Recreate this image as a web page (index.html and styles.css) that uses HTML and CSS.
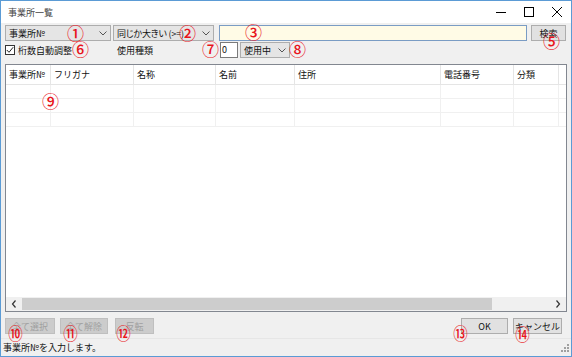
FILE: index.html
```html
<!DOCTYPE html>
<html lang="ja">
<head>
<meta charset="utf-8">
<link rel="stylesheet" href="styles.css">
</head>
<body>
<div class="window">
  <div class="titlebar">
    <span class="title">事業所一覧</span>
    <div class="winctl">
      <span class="ctl"><svg width="10" height="10" viewBox="0 0 10 10"><path d="M0 5.5h10" stroke="#000" stroke-width="1"/></svg></span>
      <span class="ctl"><svg width="10" height="10" viewBox="0 0 10 10"><rect x="0.5" y="0.5" width="9" height="9" fill="none" stroke="#000"/></svg></span>
      <span class="ctl"><svg width="10" height="10" viewBox="0 0 10 10"><path d="M0 0L10 10M10 0L0 10" stroke="#000" stroke-width="1"/></svg></span>
    </div>
  </div>
  <div class="body">
    <div class="row1">
      <div class="combo c1"><span>事業所№</span><svg class="chev" width="8" height="5" viewBox="0 0 8 5"><path d="M0.5 0.5L4 4L7.5 0.5" fill="none" stroke="#555"/></svg></div>
      <div class="combo c2"><span>同じか大きい (&gt;=)</span><svg class="chev" width="8" height="5" viewBox="0 0 8 5"><path d="M0.5 0.5L4 4L7.5 0.5" fill="none" stroke="#555"/></svg></div>
      <div class="textin"></div>
      <div class="btn search">検索</div>
    </div>
    <div class="row2">
      <div class="check"><span class="box"><svg width="8" height="8" viewBox="0 0 8 8"><path d="M0.8 4L3 6.3L7.2 1.2" fill="none" stroke="#222" stroke-width="1"/></svg></span><span>桁数自動調整</span></div>
      <span class="lbl">使用種類</span>
      <div class="numin">0</div>
      <div class="combo c3"><span>使用中</span><svg class="chev" width="8" height="5" viewBox="0 0 8 5"><path d="M0.5 0.5L4 4L7.5 0.5" fill="none" stroke="#555"/></svg></div>
    </div>
    <div class="grid">
      <div class="gridinner">
        <div class="hdr">
          <span class="col w1">事業所№</span>
          <span class="col w2">フリガナ</span>
          <span class="col w3">名称</span>
          <span class="col w4">名前</span>
          <span class="col w5">住所</span>
          <span class="col w6">電話番号</span>
          <span class="col w7">分類</span>
        </div>
        <div class="rows">
          <div class="grow"><span class="col w1"></span><span class="col w2"></span><span class="col w3"></span><span class="col w4"></span><span class="col w5"></span><span class="col w6"></span><span class="col w7"></span></div>
          <div class="grow"><span class="col w1"></span><span class="col w2"></span><span class="col w3"></span><span class="col w4"></span><span class="col w5"></span><span class="col w6"></span><span class="col w7"></span></div>
          <div class="grow"><span class="col w1"></span><span class="col w2"></span><span class="col w3"></span><span class="col w4"></span><span class="col w5"></span><span class="col w6"></span><span class="col w7"></span></div>
        </div>
      </div>
      <div class="hscroll">
        <span class="arrow"><svg width="6" height="8" viewBox="0 0 6 8"><path d="M4.5 0.5L1.5 4L4.5 7.5" fill="none" stroke="#333" stroke-width="1.2"/></svg></span>
        <div class="track"><div class="thumb"></div></div>
        <span class="arrow"><svg width="6" height="8" viewBox="0 0 6 8"><path d="M1.5 0.5L4.5 4L1.5 7.5" fill="none" stroke="#333" stroke-width="1.2"/></svg></span>
      </div>
    </div>
    <div class="btnrow">
      <div class="btn dis b1">全て選択</div>
      <div class="btn dis b2">全て解除</div>
      <div class="btn dis b3">反転</div>
      <div class="spacer"></div>
      <div class="btn ok">OK</div>
      <div class="btn cancel">キャンセル</div>
    </div>
  </div>
  <div class="status">
    <span>事業所№を入力します。</span>
    <svg class="grip" width="8" height="8" viewBox="0 0 8 8"><g fill="#a0a0a0"><rect x="6" y="0" width="2" height="2"/><rect x="3" y="3" width="2" height="2"/><rect x="6" y="3" width="2" height="2"/><rect x="0" y="6" width="2" height="2"/><rect x="3" y="6" width="2" height="2"/><rect x="6" y="6" width="2" height="2"/></g></svg>
  </div>
  <div class="marks">
    <i class="num n1">①</i>
    <i class="num n2">②</i>
    <i class="num n3">③</i>
    <i class="num n5">⑤</i>
    <i class="num n6">⑥</i>
    <i class="num n7">⑦</i>
    <i class="num n8">⑧</i>
    <i class="num n9">⑨</i>
    <i class="num narrow n10">⑩</i>
    <i class="num narrow n11">⑪</i>
    <i class="num narrow n12">⑫</i>
    <i class="num narrow n13">⑬</i>
    <i class="num narrow n14">⑭</i>
  </div>
</div>
</body>
</html>
```
FILE: styles.css
```css
* { box-sizing: border-box; }
html, body { margin: 0; padding: 0; }
body {
  font-family: "Noto Sans CJK JP", "Noto Sans", sans-serif;
  font-size: 9px;
  color: #111;
  background: #f0f0f0;
}
.window {
  position: relative;
  width: 572px;
  height: 357px;
  border: 1px solid #5b9bd5;
  background: #f0f0f0;
  display: flex;
  flex-direction: column;
  overflow: hidden;
}
.titlebar {
  height: 22px;
  background: #fff;
  display: flex;
  align-items: center;
  padding-left: 7px;
  flex: none;
}
.title { font-size: 9px; color: #444; flex: 1; }
.winctl { display: flex; height: 100%; }
.ctl { width: 28px; display: flex; align-items: center; justify-content: center; }
.body {
  flex: 1;
  padding: 2px 4px 0 4px;
  display: flex;
  flex-direction: column;
}
.row1 { display: flex; height: 16px; gap: 2px; }
.combo {
  height: 16px;
  background: #e5e5e5;
  border: 1px solid #adadad;
  display: flex;
  align-items: center;
  padding-left: 3px;
  line-height: 1;
}
.combo span { flex: 1; white-space: nowrap; }
.combo .chev { margin-right: 3px; }
.c1 { width: 106px; }
.c2 { width: 101px; }
.c2 span { font-feature-settings: "palt"; letter-spacing: -0.2px; }
.textin {
  width: 308px;
  height: 16px;
  margin-left: 3px;
  background: #fffbe6;
  border: 1px solid #7a9cc4;
}
.btn {
  height: 16px;
  background: #e1e1e1;
  border: 1px solid #adadad;
  display: flex;
  align-items: center;
  justify-content: center;
  line-height: 1;
}
.search { width: 35px; margin-left: 2px; }
.row2 { display: flex; align-items: center; height: 16px; margin-top: 1px; }
.check { display: flex; align-items: center; gap: 3px; width: 112px; }
.box {
  width: 10px; height: 10px;
  border: 1px solid #333;
  background: #fff;
  display: flex; align-items: center; justify-content: center;
}
.lbl { width: 103px; }
.numin {
  width: 18px; height: 16px;
  background: #fff;
  border: 1px solid #7a7a7a;
  padding-left: 1px;
  line-height: 14px;
}
.c3 { width: 50px; margin-left: 2px; }
.grid {
  margin-top: 6px;
  height: 248px;
  border: 1px solid #828790;
  background: #fff;
  display: flex;
  flex-direction: column;
}
.gridinner { flex: 1; overflow: hidden; }
.hdr { display: flex; height: 20px; border-bottom: 1px solid #e5e5e5; }
.hdr .col { display: flex; align-items: center; padding-left: 3px; border-right: 1px solid #e5e5e5; white-space: nowrap; }
.grow { display: flex; height: 14px; border-bottom: 1px solid #f0f0f0; }
.grow .col { border-right: 1px solid #f0f0f0; }
.col { flex: none; height: 100%; }
.w1 { width: 45px; }
.w2 { width: 83px; }
.w3 { width: 82px; }
.w4 { width: 79px; }
.w5 { width: 146px; }
.w6 { width: 73px; }
.w7 { width: 45px; }
.hscroll { height: 14px; display: flex; background: #f0f0f0; flex: none; }
.arrow { width: 16px; display: flex; align-items: center; justify-content: center; }
.track { flex: 1; display: flex; padding: 1px 0; }
.thumb { width: 470px; background: #cdcdcd; }
.btnrow { display: flex; margin-top: 6px; height: 16px; gap: 5px; }
.b1 { width: 50px; }
.b2 { width: 48px; }
.b3 { width: 39px; margin-left: 2px; }
.dis { color: #a0a0a0; background: #cccccc; border-color: #bfbfbf; }
.spacer { flex: 1; }
.ok { width: 47px; }
.cancel { width: 49px; margin-right: 5px; }
.status {
  height: 18px;
  flex: none;
  display: flex;
  align-items: center;
  padding-left: 2px;
  padding-right: 2px;
  border-top: 1px solid #e6e6e6;
  justify-content: space-between;
}
.marks { position: absolute; inset: 0; pointer-events: none; }
.num {
  position: absolute;
  font-style: normal;
  font-weight: 500;
  color: #e8141c;
  font-size: 17px;
  line-height: 17px;
  width: 17px;
  text-align: center;
  font-family: "Noto Sans CJK JP", sans-serif;
}
.narrow { transform: scaleX(0.85); }
.n1 { left: 66px; top: 23px; }
.n2 { left: 178px; top: 23px; }
.n3 { left: 244px; top: 22px; }
.n5 { left: 542px; top: 31px; }
.n6 { left: 71px; top: 39px; }
.n7 { left: 201px; top: 39px; }
.n8 { left: 288px; top: 39px; }
.n9 { left: 41px; top: 91px; }
.n10 { left: 6px; top: 323px; }
.n11 { left: 61px; top: 323px; }
.n12 { left: 114px; top: 323px; }
.n13 { left: 451px; top: 323px; }
.n14 { left: 513px; top: 324px; }
```
